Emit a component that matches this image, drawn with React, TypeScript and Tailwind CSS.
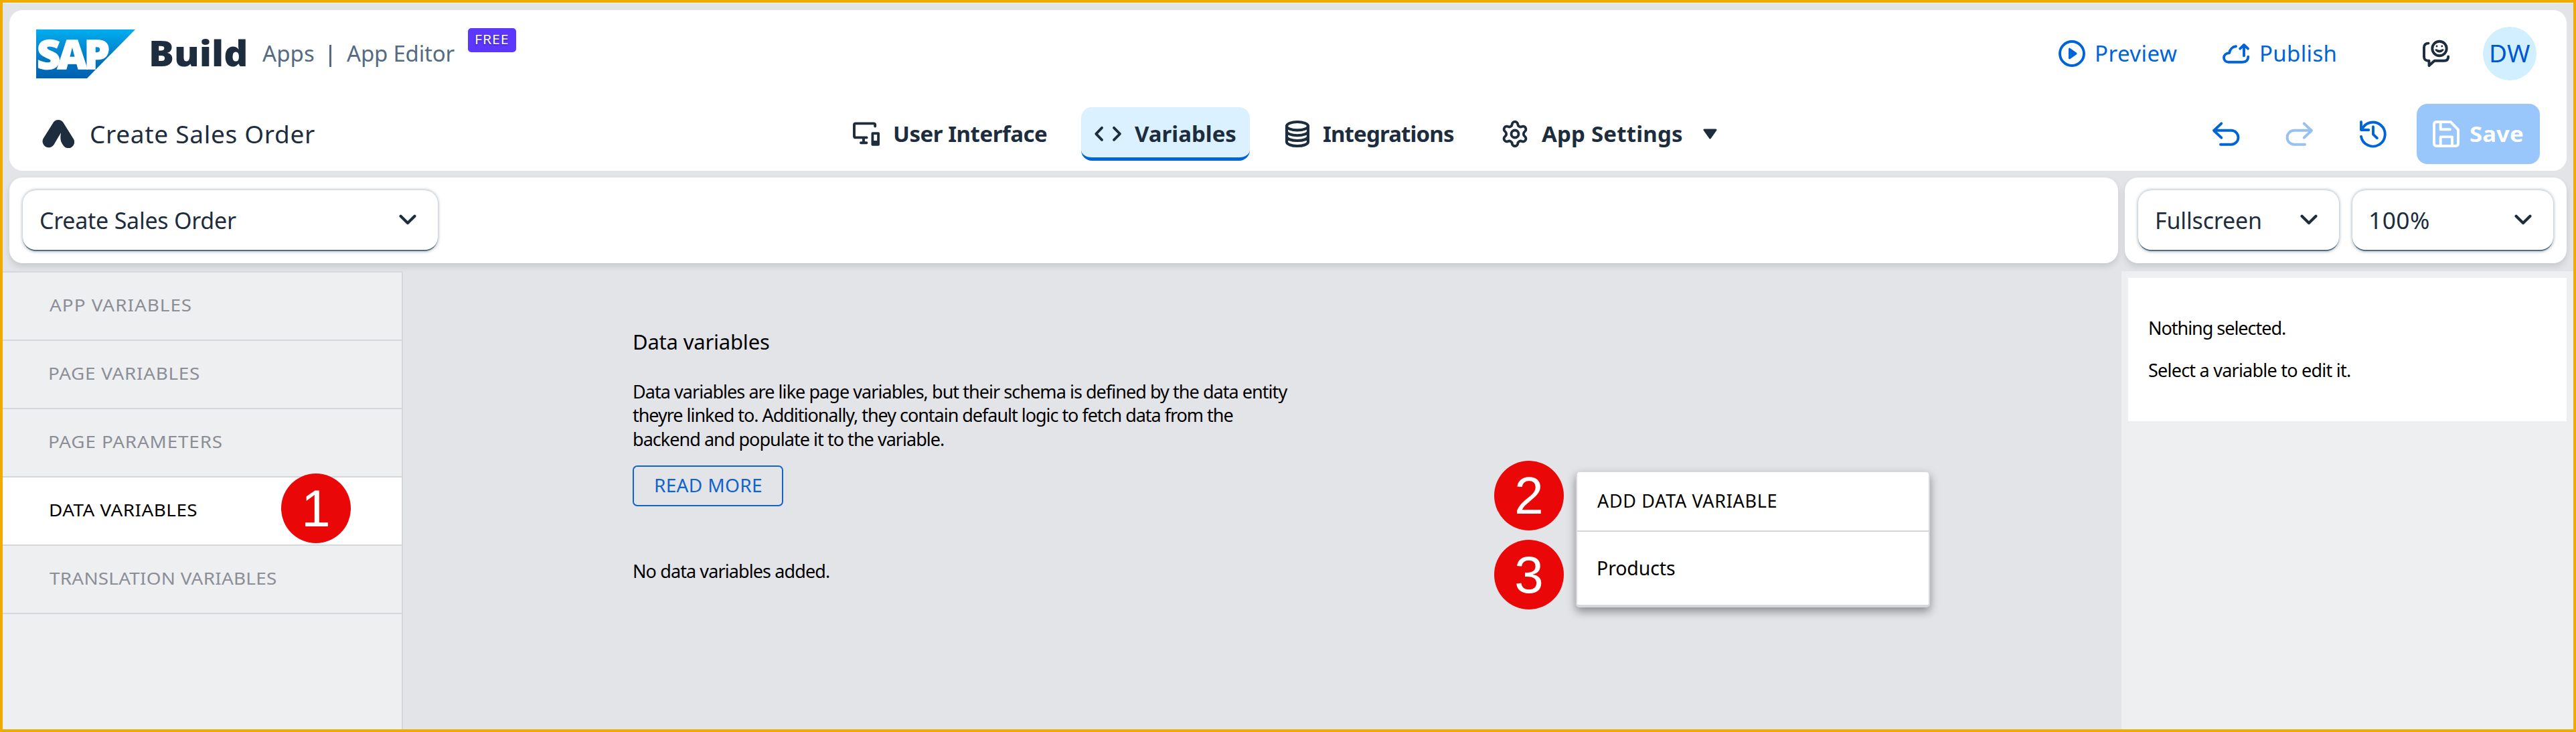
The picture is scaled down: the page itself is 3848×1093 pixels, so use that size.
import React from "react";
import { Settings } from "lucide-react";

type IconProps = { className?: string; width?: number; children: React.ReactNode };

function Icon({ className = "", width = 3.9, children }: IconProps) {
  return (
    <svg
      viewBox="0 0 40 40"
      className={`h-10 w-10 shrink-0 overflow-visible ${className}`}
      fill="none"
      stroke="currentColor"
      strokeWidth={width}
      strokeLinecap="round"
      strokeLinejoin="round"
    >
      {children}
    </svg>
  );
}

function SapLogo() {
  return (
    <svg viewBox="0 0 148 73" className="h-[73px] w-[148px] shrink-0">
      <defs>
        <linearGradient id="sap" x1="0" y1="0" x2="0" y2="1">
          <stop offset="0" stopColor="#00aeef" />
          <stop offset="0.25" stopColor="#0097dc" />
          <stop offset="0.7" stopColor="#0070be" />
          <stop offset="1" stopColor="#0062b1" />
        </linearGradient>
      </defs>
      <path d="M0 0H148L76 73H0Z" fill="url(#sap)" />
      <text
        x="1"
        y="59"
        fill="#fff"
        stroke="#fff"
        strokeWidth="1.5"
        fontFamily="Noto Sans, sans-serif"
        fontWeight="900"
        fontSize="61"
        textLength="109"
        lengthAdjust="spacing"
      >
        SAP
      </text>
    </svg>
  );
}

function AppMark() {
  return (
    <svg viewBox="0 0 48 42" className="h-[42px] w-12 shrink-0" fill="#1d2d3e">
      <path d="M24 0C27.4 0 30.2 1.7 31.8 4.4L46.7 28.3A9 9 0 0 1 31.6 38.2C27.2 32.5 26.6 28 28 19.3L17 37.8A9.2 9.2 0 0 1 1.4 28.3L16.3 4.4C17.9 1.7 20.6 0 24 0Z" />
    </svg>
  );
}

function Chevron() {
  return (
    <svg viewBox="0 0 26 16" className="h-4 w-[26px] shrink-0" fill="none" stroke="#1d2d3e" strokeWidth="4.2" strokeLinecap="round" strokeLinejoin="round">
      <path d="M2.6 2.8L13 13L23.4 2.8" />
    </svg>
  );
}

function SelectBox({ className, children }: { className: string; children: React.ReactNode }) {
  return (
    <div
      className={`flex h-[91px] shrink-0 items-center justify-between overflow-hidden rounded-[20px] border-b-2 border-[#556b82] bg-white text-[34px] leading-none text-[#1d2d3e] shadow-[0_0_4px_1px_rgba(85,107,130,0.45)] ${className}`}
    >
      {children}
      <Chevron />
    </div>
  );
}

function NavItem({ className, children }: { className: string; children: React.ReactNode }) {
  return (
    <div className={`flex h-20 shrink-0 items-center overflow-hidden pl-5 text-[33px] leading-none font-bold ${className}`}>
      {children}
    </div>
  );
}

function Step({ n, className }: { n: number; className: string }) {
  return (
    <div
      className={`absolute flex size-[104px] items-center justify-center rounded-full bg-[#ea0707] font-['Liberation_Sans',Arial,sans-serif] text-[78px] leading-none text-white ${className}`}
    >
      {n}
    </div>
  );
}

const sections = [
  { label: "APP VARIABLES", stretch: "scale-x-[1.07] tracking-[0.95px]", pad: "pl-[70px]" },
  { label: "PAGE VARIABLES", stretch: "scale-x-[1.07] tracking-[0.68px]", pad: "pl-[68px]" },
  { label: "PAGE PARAMETERS", stretch: "scale-x-[1.07] tracking-[0.8px]", pad: "pl-[68px]" },
  { label: "DATA VARIABLES", stretch: "scale-x-[1.07] tracking-[0.45px]", pad: "pl-[69px]", active: true },
  { label: "TRANSLATION VARIABLES", stretch: "scale-x-[1.07] tracking-[0.26px]", pad: "pl-[70px]" },
];

function Header() {
  return (
    <header className="mx-2.5 flex h-60 shrink-0 flex-col rounded-[20px] bg-white text-[#1d2d3e]">
      <div className="flex h-[130px] items-center pr-[45px] pl-10">
        <SapLogo />
        <span className="mt-[-4px] ml-5 w-[163px] origin-left scale-x-[1.063] text-[53px] leading-none font-black">Build</span>
        <span className="mt-[-2px] ml-[7px] w-[100px] text-[33px] leading-none tracking-[0.1px] text-[#556b82]">Apps</span>
        <span className="mt-[7px] h-[33px] w-[3px] bg-[#556b82]" />
        <span className="mt-[-2px] ml-[23px] w-[181px] text-[33px] leading-none tracking-[-0.2px] text-[#556b82]">App Editor</span>
        <span className="mt-[-40px] flex h-9 w-[72px] items-center rounded-[5px] bg-[#5d36ff] pb-[2px] pl-[10px] text-[19px] leading-none text-white [text-shadow:0_1px_2px_rgba(0,0,0,0.5)]">
          <span className="origin-left scale-x-[1.12] tracking-[0.8px]">FREE</span>
        </span>
        <div className="ml-auto flex items-center text-[33px] leading-none text-[#0064d9]">
          <Icon>
            <circle cx="20" cy="20" r="18" />
            <path d="M16.5 13.2V26.8L26 20Z" fill="currentColor" strokeWidth="3" />
          </Icon>
          <span className="mt-[-2px] ml-3.5 w-[191px] tracking-[0.48px]">Preview</span>
          <Icon>
            <path d="M20 9.3C15 9.8 11 13.5 10.2 19C5 19.5 2 22.5 2 26C2 30 5 32.7 9 32.7H30C35 32.7 38.3 29.5 38.3 24.8M32 8V23.3M26.2 12.6L32 7L38 12.6" />
          </Icon>
          <span className="mt-[-2px] ml-[15px] w-[244px] tracking-[0.35px]">Publish</span>
          <Icon className="text-[#1d2d3e]">
            <path d="M8.5 4.6C4.5 4.6 2 7 2 10.5V25C2 28.5 4.5 30.7 8 30.7H9.5V38L17.5 30.7H32C36 30.7 38.2 28.5 38.2 24.5" />
            <circle cx="25" cy="12.5" r="10.7" />
            <path d="M19.8 14.5Q25 20 30.2 14.5Q25 17.5 19.8 14.5Z" strokeWidth="2.6" fill="currentColor" />
            <path d="M21 8.8V9M28.8 8.8V9" strokeWidth="2.8" />
          </Icon>
          <span className="ml-[50px] flex size-20 items-center justify-center rounded-full bg-[#d1efff] pb-[3px] text-[37px] tracking-[0.6px] text-[#0057d2]">
            DW
          </span>
        </div>
      </div>

      <div className="flex h-[110px] items-center pr-10">
        <div className="flex w-[1240px] shrink-0 items-center pl-[49px]">
          <AppMark />
          <span className="mt-[-2px] ml-[23px] text-[37px] leading-none tracking-[0.69px]">Create Sales Order</span>
        </div>
        <nav className="flex gap-[31px]">
          <NavItem className="w-[330px]">
            <Icon>
              <path d="M33.2 8.5V6.5Q33.2 4.4 31 4.4H4.2Q2 4.4 2 6.6V23.2Q2 25.4 4.2 25.4H20.6M16 26V32.8M12 33.2H20.4" />
              <path d="M29.5 17.3H38Q40 17.3 40 19.3V35.8Q40 37.8 38 37.8H29.5Q27.5 37.8 27.5 35.8V19.3Q27.5 17.3 29.5 17.3ZM31.3 21V30H36.2V21Z" fill="currentColor" fillRule="evenodd" stroke="none" />
            </Icon>
            <span className="mt-[-2px] ml-5 tracking-[-0.47px]">User Interface</span>
          </NavItem>
          <NavItem className="w-[252px] rounded-2xl border-b-5 border-[#0064d9] bg-[#dbf1ff] pt-[5px]">
            <Icon>
              <path d="M11 10.8L2.3 19.8L11 28.8M29 10.8L37.9 19.8L29 28.8" />
            </Icon>
            <span className="mt-[-2px] ml-5">Variables</span>
          </NavItem>
          <NavItem className="w-[294px]">
            <Icon width={4.1}>
              <ellipse cx="20" cy="8.2" rx="16" ry="6.2" />
              <path d="M4 8.2V31.8C4 35.4 11 38 20 38S36 35.4 36 31.8V8.2M4 16C4 19.6 11 22.2 20 22.2S36 19.6 36 16M4 23.8C4 27.4 11 30 20 30S36 27.4 36 23.8" />
            </Icon>
            <span className="mt-[-2px] ml-[18px] tracking-[-0.85px]">Integrations</span>
          </NavItem>
          <NavItem className="w-[360px]">
            <Settings className="-m-[2px] size-11 shrink-0" strokeWidth={2.1} />
            <span className="mt-[-2px] ml-5 w-[241px] tracking-[0.2px]">App Settings</span>
            <svg viewBox="0 0 21 16" className="h-4 w-[21px]" fill="#1d2d3e" stroke="#1d2d3e" strokeWidth="3" strokeLinejoin="round">
              <path d="M2 2H19L10.5 14Z" />
            </svg>
          </NavItem>
        </nav>
        <div className="ml-auto flex items-center text-[#0064d9]">
          <Icon>
            <path d="M13.3 4.3L2 15L13.3 25.7M2 14.8H28A10.4 10.4 0 0 1 28 35.7H12" />
          </Icon>
          <Icon className="ml-[70px] text-[#99c1f0]">
            <path d="M26.7 4.3L38 15L26.7 25.7M38 14.8H12A10.4 10.4 0 0 0 12 35.7H28" />
          </Icon>
          <Icon className="ml-[70px]">
            <path d="M2 2V14H13.3M3 13.8A18 18 0 1 1 2 23.8M20 9.3V20.6L25.8 26.2" />
          </Icon>
          <div className="ml-[45px] flex h-[90px] w-[184px] items-center rounded-2xl bg-[#99c6fb] pl-6 text-[33px] leading-none font-bold text-white">
            <Icon>
              <path d="M6 2H26.7L38 13.6V34Q38 38 34 38H6Q2 38 2 34V6Q2 2 6 2ZM11.7 2.5V13.2H26M11.7 37.5V24.4H29V37.5" />
            </Icon>
            <span className="mt-[-2px] ml-[15px] origin-left scale-x-[1.05] tracking-[0.1px]">Save</span>
          </div>
        </div>
      </div>
    </header>
  );
}

export default function App() {
  return (
    <div className="flex h-[1093px] w-[3848px] flex-col overflow-hidden border-4 border-[#f0ab00] bg-[#e3e4e8] font-['Noto_Sans',sans-serif] whitespace-nowrap text-black">
      <div className="mb-2.5 h-px shrink-0 bg-white" />
      <Header />

      <div className="mx-2.5 mt-2.5 flex h-32 shrink-0 gap-2.5">
        <div className="flex w-[3150px] items-center rounded-[20px] bg-white pl-5 shadow-[0_5px_10px_rgba(0,0,0,0.12)]">
          <SelectBox className="w-[620px] pr-8 pl-[25px]">
            <span className="mt-[2px] tracking-[-0.25px]">Create Sales Order</span>
          </SelectBox>
        </div>
        <div className="flex w-[660px] items-center gap-5 rounded-[20px] bg-white px-5 shadow-[0_5px_10px_rgba(0,0,0,0.12)]">
          <SelectBox className="w-[300px] pr-8 pl-[25px]">
            <span className="mt-[2px] tracking-[-0.17px]">Fullscreen</span>
          </SelectBox>
          <SelectBox className="w-[300px] pr-8 pl-6">
            <span className="mt-[2px] origin-left scale-x-[1.04] tracking-[0.4px]">100%</span>
          </SelectBox>
        </div>
      </div>

      <div className="mt-3 flex min-h-0 flex-1">
        <aside className="relative w-[598px] shrink-0 border-t-2 border-r-2 border-[#d5d7dc] bg-[#eeeff1]">
          {sections.map((s) => (
            <div
              key={s.label}
              className={`flex h-[102px] items-center border-b-2 border-[#d5d7dc] pb-1 text-[26px] leading-none ${s.pad} ${
                s.active ? "bg-white text-black" : "text-[#8b8e96]"
              }`}
            >
              <span className={`origin-left ${s.stretch}`}>{s.label}</span>
            </div>
          ))}
          <Step n={1} className="top-[300px] left-[416px]" />
        </aside>

        <main className="relative flex-1">
          <div className="flex flex-col items-start pt-[87px] pl-[343px] text-[27px] leading-9">
            <h1 className="text-[31px] tracking-[-0.2px]">Data variables</h1>
            <div className="mt-[38.5px] leading-[35.7px]">
              <p className="tracking-[-0.95px]">Data variables are like page variables, but their schema is defined by the data entity</p>
              <p className="tracking-[-1.03px]">theyre linked to. Additionally, they contain default logic to fetch data from the</p>
              <p className="tracking-[-0.97px]">backend and populate it to the variable.</p>
            </div>
            <button className="mt-[21px] flex h-[61px] w-[225px] items-center justify-center rounded-[7px] border-2 border-[#1164cc] pb-0.5 leading-none text-[#1164cc]">
              <span className="scale-x-[1.04] tracking-[0.3px]">READ MORE</span>
            </button>
            <p className="mt-[79px] tracking-[-0.9px]">No data variables added.</p>
          </div>

          <div className="absolute top-[299px] left-[1752px] w-[529px] rounded-[5px] border-x-2 border-t border-b-4 border-[#d5d7dc] bg-white shadow-[0_6px_14px_rgba(0,0,0,0.4)]">
            <div className="flex h-[89px] items-center border-b-2 border-[#d5d7dc] pb-0.5 pl-[30px] text-[27px] leading-none tracking-[0.66px]">
              ADD DATA VARIABLE
            </div>
            <div className="flex h-[109px] items-center pb-px pl-[29px] text-[28.5px] leading-none tracking-[-0.11px]">Products</div>
          </div>
          <Step n={2} className="top-[283px] left-[1630px]" />
          <Step n={3} className="top-[401px] left-[1630px]" />
        </main>

        <aside className="w-[675px] shrink-0 bg-[#eeeff1] pt-2.5 pr-2.5 pl-2.5">
          <div className="h-[214px] bg-white pt-[57px] pl-[30px] text-[27px] leading-9">
            <p className="tracking-[-1.03px]">Nothing selected.</p>
            <p className="mt-[27px] tracking-[-0.77px]">Select a variable to edit it.</p>
          </div>
        </aside>
      </div>
    </div>
  );
}
